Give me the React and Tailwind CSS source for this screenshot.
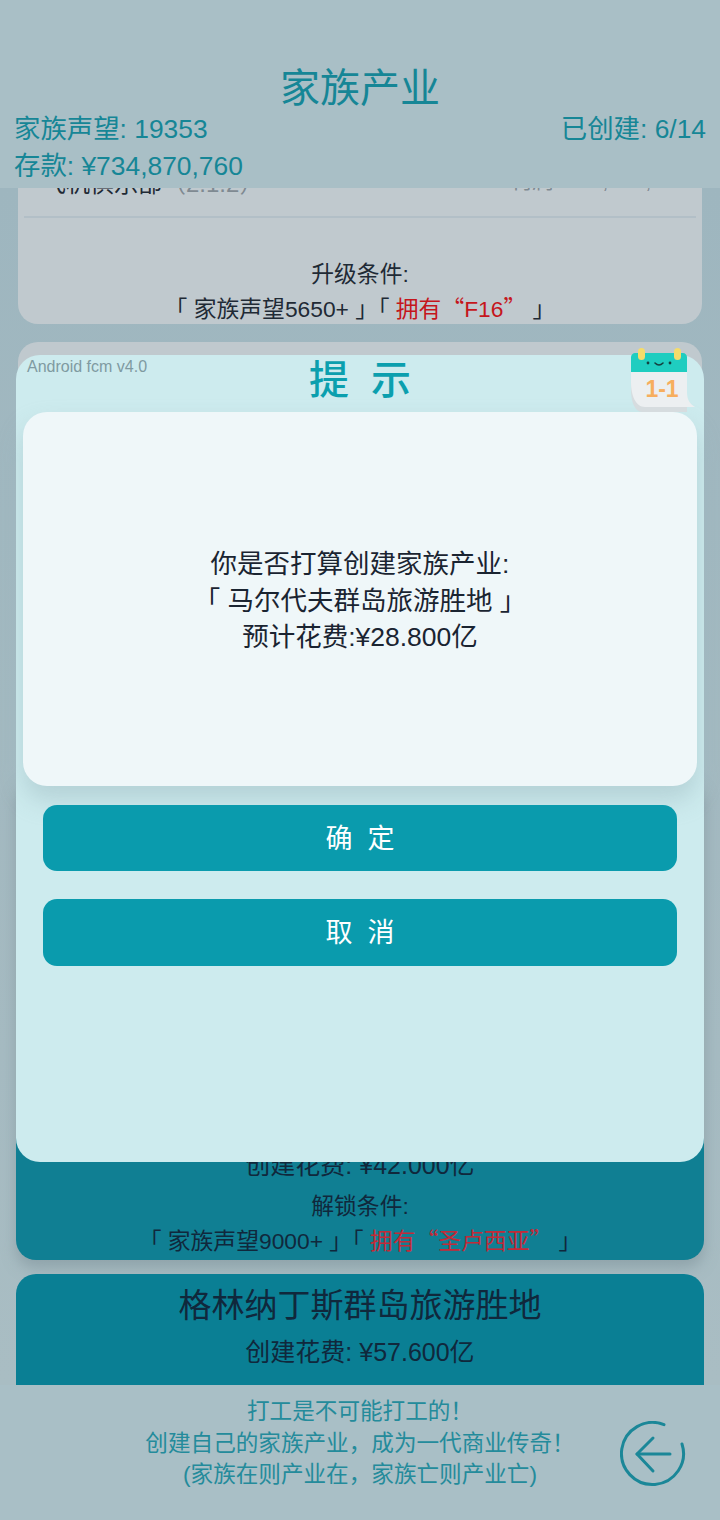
import React from 'react'

const FONT = 'font-["Liberation_Sans","Noto_Sans_CJK_SC",sans-serif]'

function CalendarBadge() {
  return (
    <svg width="68" height="68" viewBox="0 0 68 68" className="block">
      <path d="M3 26 H59 V66 H14 C7 66 3 56 3 44 Z" fill="#d6dcdf" />
      <path d="M3 24 H59 V46 C59 54 62 58 67 61 H17 C8 61 3 50 3 36 Z" fill="#eceff1" />
      <path d="M3 11 C3 9 5 7 7 7 H55 C57 7 59 9 59 11 V26 H3 Z" fill="#1fcdc0" />
      <rect x="10" y="2" width="7" height="12" rx="3.500" fill="#f5dc6a" />
      <rect x="46" y="2" width="7" height="12" rx="3.500" fill="#f5dc6a" />
      <circle cx="20" cy="17" r="1.400" fill="#14403f" />
      <circle cx="42" cy="17" r="1.400" fill="#14403f" />
      <path d="M27 17 Q31 21 35 17" fill="none" stroke="#14403f" strokeWidth="1.600" strokeLinecap="round" />
      <text x="34" y="51" textAnchor="middle" fontSize="23" fontWeight="700" fill="#f7ae5e" fontFamily="Liberation Sans, sans-serif">1-1</text>
    </svg>
  )
}

function BackIcon() {
  return (
    <svg width="66" height="66" viewBox="0 0 66 66" fill="none" stroke="#1b8798" strokeWidth="3" strokeLinecap="round" strokeLinejoin="round">
      <path d="M62 23 A31 31 0 1 1 44 3.700" />
      <path d="M50 33 H17" />
      <path d="M33 17 L17 33 L33 50" />
    </svg>
  )
}

function Quoted({ children }) {
  return (
    <>
      <span className='font-["Noto_Sans_CJK_SC",sans-serif]'>“</span>
      {children}
      <span className='font-["Noto_Sans_CJK_SC",sans-serif]'>”</span>
    </>
  )
}

function Conditions({ label, first, owned, redClass }) {
  return (
    <div className="text-center text-[22.800px] leading-[34px]">
      <p>{label}</p>
      <p className="whitespace-pre">
        {'「 '}{first}{' 」「 '}<span className={redClass}>拥有<Quoted>{owned}</Quoted></span>{' 」'}
      </p>
    </div>
  )
}

function ModalButton({ children }) {
  return (
    <button className="flex h-[66.400px] w-full items-center justify-center rounded-[14px] bg-[#0a9bad] pt-[2px] text-[27px] whitespace-pre text-white">
      {children}
    </button>
  )
}

export default function App() {
  return (
    <div className={`relative flex h-[1520px] w-[720px] flex-col overflow-hidden bg-[#a9bfc6] ${FONT}`}>
      {/* Header */}
      <header className="h-[188px] shrink-0 px-[14px] pt-[64px] text-[#168696]">
        <h1 className="text-center text-[40px] leading-[48px] font-normal">家族产业</h1>
        <div className="-mt-[1px] flex justify-between text-[26.400px] leading-[37px]">
          <div>
            <p>家族声望: 19353</p>
            <p>存款: ¥734,870,760</p>
          </div>
          <p>已创建: 6/14</p>
        </div>
      </header>

      {/* Property list, scrolled */}
      <div className="h-[1197px] shrink-0 overflow-hidden bg-linear-to-b from-[#9eb6bf] to-[#a9bdc3] px-4">
        <div className="-mt-[40px] flex flex-col text-[#1f2a35]">
          <section className="mx-[2px] h-[176px] rounded-b-[20px] bg-[#c0c9ce] px-[6px]">
            <div className="flex h-[70px] items-end justify-between border-b-2 border-[#b2bfc7] pr-[8px] pl-[18px] pb-[19px] leading-[26px]">
              <p className="text-[24px]">飞机俱乐部<span className="text-[#7f8a92]">（2.1.2）</span></p>
              <p className="mb-[3px] text-[22px] text-[#7f8a92]">利润: ¥78,000,000</p>
            </div>
            <div className="pt-[39px]">
              <Conditions label="升级条件:" first="家族声望5650+" owned="F16" redClass="text-[#c5161c]" />
            </div>
          </section>

          <section className="mx-[2px] mt-[18px] h-[420px] rounded-[20px] bg-[#c0c9ce]" />

          <section className="mt-[14px] flex h-[484px] flex-col justify-end rounded-[20px] bg-[#107f93] pb-[2px] text-[#10283c] shadow-[0_8px_14px_rgba(120,140,148,0.5)]">
            <p className="mb-[6px] text-center text-[25px] leading-[36px]">创建花费: ¥42.000亿</p>
            <Conditions label="解锁条件:" first="家族声望9000+" owned="圣卢西亚" redClass="text-[#c22a38]" />
          </section>

          <section className="mt-[14px] h-[240px] rounded-[20px] bg-[#0a7f94] pt-[10px] text-center text-[#10283c]">
            <h2 className="text-[33px] leading-[44px]">格林纳丁斯群岛旅游胜地</h2>
            <p className="mt-[2px] text-[25px] leading-[44px]">创建花费: ¥57.600亿</p>
            <p className="mt-[6px] text-[22.800px] leading-[34px]">解锁条件:</p>
          </section>
        </div>
      </div>

      {/* Footer */}
      <footer className="relative flex-1 pt-[11px] text-center text-[22.600px] leading-[31.500px] text-[#248b9b]">
        <p>打工是不可能打工的！</p>
        <p>创建自己的家族产业，成为一代商业传奇！</p>
        <p>(家族在则产业在，家族亡则产业亡)</p>
        <div className="absolute top-[36px] left-[620px]">
          <BackIcon />
        </div>
      </footer>

      {/* Dialog */}
      <div className="absolute top-[355px] left-4 h-[807px] w-[688px] rounded-[24px] bg-[#cdebee] px-[7px]">
        <span className="absolute top-[3px] left-[11px] text-[16px] leading-[18px] text-[#7f9aa1]">Android fcm v4.0</span>
        <div className="absolute -top-[9px] right-[8px]">
          <CalendarBadge />
        </div>
        <h3 className="h-[57px] text-center text-[40px] leading-[50px] font-medium whitespace-pre text-[#0b9fae]">提  示</h3>
        <div className="flex h-[374px] flex-col items-center justify-center rounded-[24px] bg-[#eff7f9] pt-[4px] text-center text-[26.500px] leading-[36.500px] whitespace-pre text-[#1a2431] shadow-[0_14px_24px_rgba(150,180,186,0.45)]">
          <p>你是否打算创建家族产业:</p>
          <p>「 马尔代夫群岛旅游胜地 」</p>
          <p>预计花费:¥28.800亿</p>
        </div>
        <div className="mt-[19px] flex flex-col gap-[28px] px-5">
          <ModalButton>确  定</ModalButton>
          <ModalButton>取  消</ModalButton>
        </div>
      </div>
    </div>
  )
}
